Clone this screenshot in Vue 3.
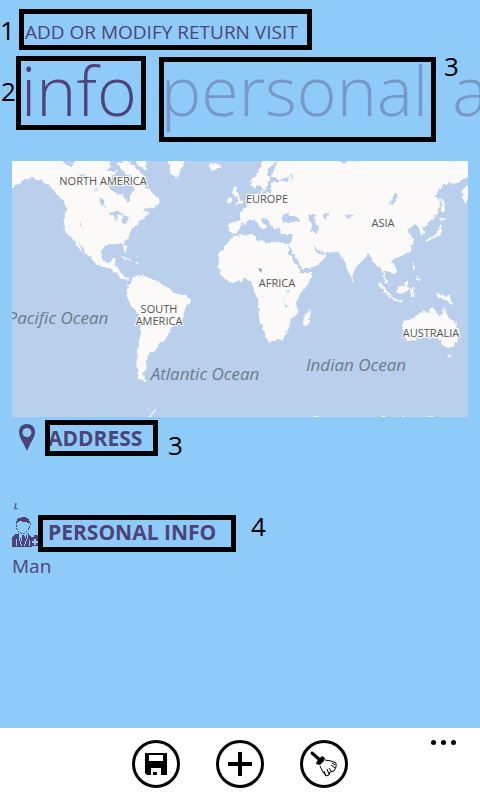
<script setup>
const land = [
  // North and Central America
  'M10 159H107L110 167L104 170L118 170L110 175L108 187L115 192L123 195L126 202L129 201L129 194L133 192L131 181L137 178L143 185L148 188L152 193L159 200L155 206L147 207L141 212L148 210L147 214L142 217L137 223L130 229L128 235L123 241L126 246L124 251L121 243L113 243L105 244L100 250L101 258L105 262L110 261L112 258L115 258L113 265L118 266L119 271L124 276L128 277L126 279L120 277L114 271L108 267L100 265L92 261L90 257L84 251L77 240L79 246L84 254L77 246L72 238L64 230L63 218L65 212L65 205L59 197L53 190L48 184L40 180L31 177L23 179L17 184L10 187Z',
  'M116 162L126 159L133 165L140 172L144 177L139 182L133 176L125 173Z',
  'M135 159H145L146 169L139 166Z',
  // South America
  'M128 283L133 276L142 274L150 278L158 280L167 287L172 291L183 293L190 299L184 307L182 318L170 327L165 338L158 342L155 348L147 355L145 365L142 373L145 382L138 378L135 363L136 350L140 330L138 313L130 305L125 293Z',
  // Greenland, Iceland, Britain, Ireland
  'M166 159H184L179 170L176 178L171 174Z',
  'M207 166L210 163L215 162L220 165L217 169L211 170Z',
  'M233 185L236 186L235 191L238 196L242 202L234 204L237 199L232 192Z',
  'M227 197L231 196L231 201L226 202Z',
  // Scandinavia
  'M263 159H278L269 165L266 173L269 179L265 187L262 191L260 184L253 187L249 180L257 172Z',
  // Europe and Asia
  'M278 159H470V176L463 177L458 182L443 183L433 196L439 198L438 210L430 220L422 226L424 231L421 234L418 227L413 223L407 230L412 237L410 250L400 255L392 258L391 261L395 267L395 272L391 274L386 270L382 270L384 276L388 284L384 280L380 268L373 262L368 252L363 258L354 267L351 277L347 270L343 258L337 252L320 251L312 244L317 252L325 253L323 258L315 265L301 269L297 260L287 244L290 242L292 233L282 233L278 227L281 225L273 229L265 217L259 218L266 227L261 228L254 218L247 220L240 224L237 231L232 233L228 231V221L239 220L239 211L247 205L250 195L258 192L260 188L263 193L270 192L270 182L279 180L275 177L270 175L273 167Z',
  // Africa
  'M232 235L253 233L255 238L267 242L273 240L287 243L288 252L297 267L300 272L312 272L307 283L299 292L295 302L297 313L289 318L289 325L282 338L268 341L265 335L257 315L258 305L253 289L250 280L243 278L230 282L222 277L217 265L218 252L227 242Z',
  'M310 307L309 318L305 326L302 323L303 315Z',
  // Australia and Tasmania
  'M401 322L415 315L423 310L427 312L429 307L434 308L437 315L440 316L443 305L447 315L455 323L459 332L453 345L448 347L442 345L438 338L427 336L417 338L407 341L403 333Z',
  'M446 353H450L449 357Z',
  // South-east Asia
  'M435 292L441 294L448 295L452 304L444 299L437 297Z',
  'M396 286L401 285L407 280L407 288L402 293L396 291Z',
  'M376 281L381 284L390 293L389 297L383 291Z',
  'M391 297L402 300L401 302L391 299Z',
  'M409 287L415 287L411 290L414 295L410 296Z',
  'M411 262L414 266L411 270Z M415 276L420 278L417 281Z',
  'M350 276L353 279L352 281Z',
  // Japan, Sakhalin, Kamchatka
  'M425 239L430 236L435 233L440 223L441 231L438 236L431 237L426 241Z',
  'M439 217L445 217L440 221Z M441 196L444 203L443 211L441 209Z',
  'M470 183L465 185L461 191L463 203L470 194Z',
  // Caribbean
  'M120 255L127 257L131 260L122 257Z M132 260L139 261L137 263Z',
  // Antarctica
  'M310 418L314 415L320 416L320 419Z M380 414L386 417L382 419Z M397 417L403 415L405 419Z M424 416L434 415L434 419Z M146 419L151 412L150 417Z M150 412L160 405L152 412Z',
]
const water = [
  'M61 159H74L72 165L65 164Z',
  'M74 171L80 174L86 173L82 177Z',
  'M98 197L102 198L103 204L106 207L101 204Z',
  'M109 212L116 209L121 213L117 214L115 221L113 216Z',
  'M121 214L128 216L127 220L122 223Z M94 188L96 187L95 191Z',
  'M79 222L81 221L81 226Z',
  'M281 214L286 212L290 216L298 216L299 222L289 221L282 222Z',
  'M308 213L315 213L314 220L317 225L316 233L310 231L311 223L307 218Z',
  'M322 214L327 212L326 218L323 219Z',
  'M344 215L352 213L353 215L347 217Z',
  'M387 202L391 200L395 192L397 196L392 203Z',
  'M279 180L284 177L289 177L284 181Z M289 175L292 173L291 179Z',
  'M338 159H346L343 163Z',
  'M284 289L289 288L288 293Z M282 297L286 306L284 307Z',
]
const labels = [
  { x: 103, y: 185, text: 'NORTH AMERICA' },
  { x: 267, y: 203, text: 'EUROPE' },
  { x: 383, y: 227, text: 'ASIA' },
  { x: 277, y: 287, text: 'AFRICA' },
  { x: 159, y: 313, text: 'SOUTH' },
  { x: 159, y: 325, text: 'AMERICA' },
  { x: 431, y: 337, text: 'AUSTRALIA' },
]
const oceans = [
  { x: 58, y: 324, text: 'Pacific Ocean' },
  { x: 205, y: 380, text: 'Atlantic Ocean' },
  { x: 356, y: 371, text: 'Indian Ocean' },
]
</script>

<template>
  <div class="screen">
    <main class="content">
      <header class="title-row">
        <h1 class="title">ADD OR MODIFY RETURN VISIT</h1>
        <span class="frame frame-title"></span>
        <span class="note note-title">1</span>
      </header>

      <nav class="pivot">
        <button type="button" class="tab active">info</button>
        <button type="button" class="tab">personal</button>
        <button type="button" class="tab">a</button>
        <span class="frame frame-info"></span>
        <span class="frame frame-personal"></span>
        <span class="note note-info">2</span>
        <span class="note note-personal">3</span>
      </nav>

      <svg class="map" viewBox="12 161 456 256" role="img" aria-label="World map">
        <defs>
          <filter id="coast" x="0" y="0" width="100%" height="100%">
            <feTurbulence type="fractalNoise" baseFrequency="0.25" numOctaves="2" seed="4" />
            <feDisplacementMap in="SourceGraphic" scale="5" xChannelSelector="R" yChannelSelector="G" />
          </filter>
        </defs>
        <rect x="12" y="161" width="456" height="256" fill="#b9cfec" />
        <g filter="url(#coast)">
          <rect x="0" y="150" width="480" height="280" fill="#b9cfec" />
          <g transform="translate(1 1)">
            <path v-for="d in land" :key="d" :d="d" fill="#fbfaf9" />
            <path v-for="d in water" :key="d" :d="d" fill="#b9cfec" />
          </g>
        </g>
        <path d="M258 268L262 269L261 273Z" fill="#8d99a5" />
        <text v-for="l in labels" :key="l.text" :x="l.x" :y="l.y" class="region">{{ l.text }}</text>
        <text v-for="o in oceans" :key="o.text" :x="o.x" :y="o.y" class="ocean">{{ o.text }}</text>
      </svg>

      <section class="section address">
        <svg class="icon pin" viewBox="0 0 30 30" aria-hidden="true">
          <path fill-rule="evenodd" d="M15 1C9.500 1 7 5 7 9C7 15 12 20 15 28C18 20 23 15 23 9C23 5 20.500 1 15 1ZM15 5A4.500 4.500 0 1 1 15 14A4.500 4.500 0 1 1 15 5Z" />
        </svg>
        <h2 class="heading">ADDRESS</h2>
        <span class="frame frame-address"></span>
        <span class="note note-address">3</span>
      </section>

      <p class="mark">L</p>

      <section class="section">
        <svg class="icon person" viewBox="0 0 30 30" shape-rendering="crispEdges" aria-hidden="true">
          <path d="M4 5L6 1L12 0L16 1L18 5L17 6L8 4L4 6Z" />
          <path d="M4 5V10L6 14L9 16H13L16 13L18 9V5" fill="none" stroke="#4c4478" stroke-dasharray="2 1" />
          <path d="M0 30V21L2 18L7 16L8 20L11 27L14 20L15 16L18 18L19 20H22V18H26V20H30V29H20V30Z" />
          <path d="M7 17V22L10 29M15 17V22L12 29M4 22V29M17 23V29" fill="none" stroke="#8fcbf9" />
          <path d="M10 18H12L13 20L12 27L11 29L10 26Z" />
          <path d="M22 22H24V24H26V26H24V28H22V26H20V24H22Z" fill="#8fcbf9" />
        </svg>
        <h2 class="heading">PERSONAL INFO</h2>
        <span class="frame frame-person"></span>
        <span class="note note-person">4</span>
      </section>
      <p class="value">Man</p>
    </main>

    <footer class="appbar">
      <button type="button" class="round" aria-label="Save">
        <svg viewBox="0 0 48 48" aria-hidden="true">
          <path d="M13 13H35V35H15L13 33Z" />
          <path d="M17 15H31V21H17ZM19 28H29V35H19Z" fill="#fff" />
          <path d="M21 32H25V35H21Z" />
        </svg>
      </button>
      <button type="button" class="round" aria-label="Add">
        <svg viewBox="0 0 48 48" aria-hidden="true">
          <path d="M22 12H26V22H36V26H26V36H22V26H12V22H22Z" />
        </svg>
      </button>
      <button type="button" class="round" aria-label="Clear">
        <svg viewBox="0 0 48 48" aria-hidden="true">
          <path d="M12 13L20 20" stroke="#000" stroke-width="3" stroke-linecap="round" />
          <path d="M22 16L25 18L24 21L20 25L16 24L17 21Z" />
          <path d="M25 20L31 21L36 23L36 27L34 31L30 32L29 35L26 36L23 32L20 26" fill="none" stroke="#000" stroke-width="1" />
          <path d="M26 36L24 31M29 34L27 29M32 32L29 28M35 28L31 25M35 25L32 23" fill="none" stroke="#000" stroke-width="1" />
        </svg>
      </button>
      <button type="button" class="more" aria-label="More">
        <i></i><i></i><i></i>
      </button>
    </footer>
  </div>
</template>

<style>
body {
  margin: 0;
  background: #8fcbf9;
}
</style>

<style scoped>
.screen {
  display: flex;
  flex-direction: column;
  min-height: 100vh;
  overflow: hidden;
  background: #8fcbf9;
  color: #4c4478;
  font-family: "Open Sans", "Noto Sans", sans-serif;
}
.content {
  flex: 1;
  padding: 20px 12px 0;
}
h1, h2, p {
  margin: 0;
}
button {
  padding: 0;
  border: 0;
  background: none;
  font: inherit;
  color: inherit;
}
.title-row {
  position: relative;
  padding-left: 13px;
}
.title {
  font-size: 19px;
  line-height: 24px;
  font-weight: 400;
  white-space: nowrap;
}
.pivot {
  position: relative;
  display: flex;
  gap: 24px;
  margin: 6px -12px 31px 0;
  padding-left: 9px;
}
.tab {
  flex: none;
  font-size: 68px;
  line-height: 80px;
  font-weight: 340;
  color: #7896c8;
}
.tab.active {
  color: #4c4478;
}
.frame {
  position: absolute;
  box-sizing: border-box;
  border: 5px solid #000;
}
.note {
  position: absolute;
  font-size: 26px;
  line-height: 26px;
  color: #000;
}
.frame-title { left: 7px; top: -11px; width: 293px; height: 41px; }
.note-title { left: -12px; top: -3px; }
.frame-info { left: 4px; top: 6px; width: 130px; height: 74px; }
.frame-personal { left: 147px; top: 7px; width: 277px; height: 85px; }
.note-info { left: -11px; top: 28px; }
.note-personal { left: 432px; top: 3px; }
.frame-address { left: 33px; top: -4px; width: 113px; height: 36px; }
.note-address { left: 156px; top: 8px; }
.frame-person { left: 26px; top: -3px; width: 198px; height: 37px; }
.note-person { left: 239px; top: -5px; }
.map {
  display: block;
  width: 100%;
}
.region {
  font-size: 11px;
  font-weight: 500;
  text-anchor: middle;
  fill: #555;
  stroke: #fbfaf9;
  stroke-width: 2px;
  paint-order: stroke;
}
.ocean {
  font-size: 17px;
  font-style: italic;
  font-weight: 500;
  text-anchor: middle;
  fill: #6b7b8a;
}
.section {
  position: relative;
  display: flex;
  align-items: center;
  gap: 6px;
  height: 28px;
}
.address {
  margin: 7px 0 48px;
}
.icon {
  width: 30px;
  height: 30px;
  fill: #4c4478;
}
.heading {
  font-size: 21px;
  line-height: 28px;
  font-weight: 700;
  white-space: nowrap;
}
.mark {
  padding-left: 2px;
  font-size: 8px;
  line-height: 12px;
  font-style: italic;
  font-weight: 700;
  margin-bottom: 6px;
}
.value {
  margin-top: 8px;
  font-size: 19px;
  line-height: 24px;
}
.appbar {
  position: relative;
  display: flex;
  justify-content: center;
  align-items: center;
  gap: 36px;
  height: 72px;
  background: #fff;
}
.round {
  box-sizing: border-box;
  width: 48px;
  height: 48px;
  border: 3px solid #000;
  border-radius: 50%;
}
.round svg {
  display: block;
  width: 48px;
  height: 48px;
  margin: -3px;
}
.more {
  position: absolute;
  right: 24px;
  top: 12px;
  display: flex;
  gap: 5px;
}
.more i {
  width: 5px;
  height: 5px;
  border-radius: 50%;
  background: #000;
}
</style>
